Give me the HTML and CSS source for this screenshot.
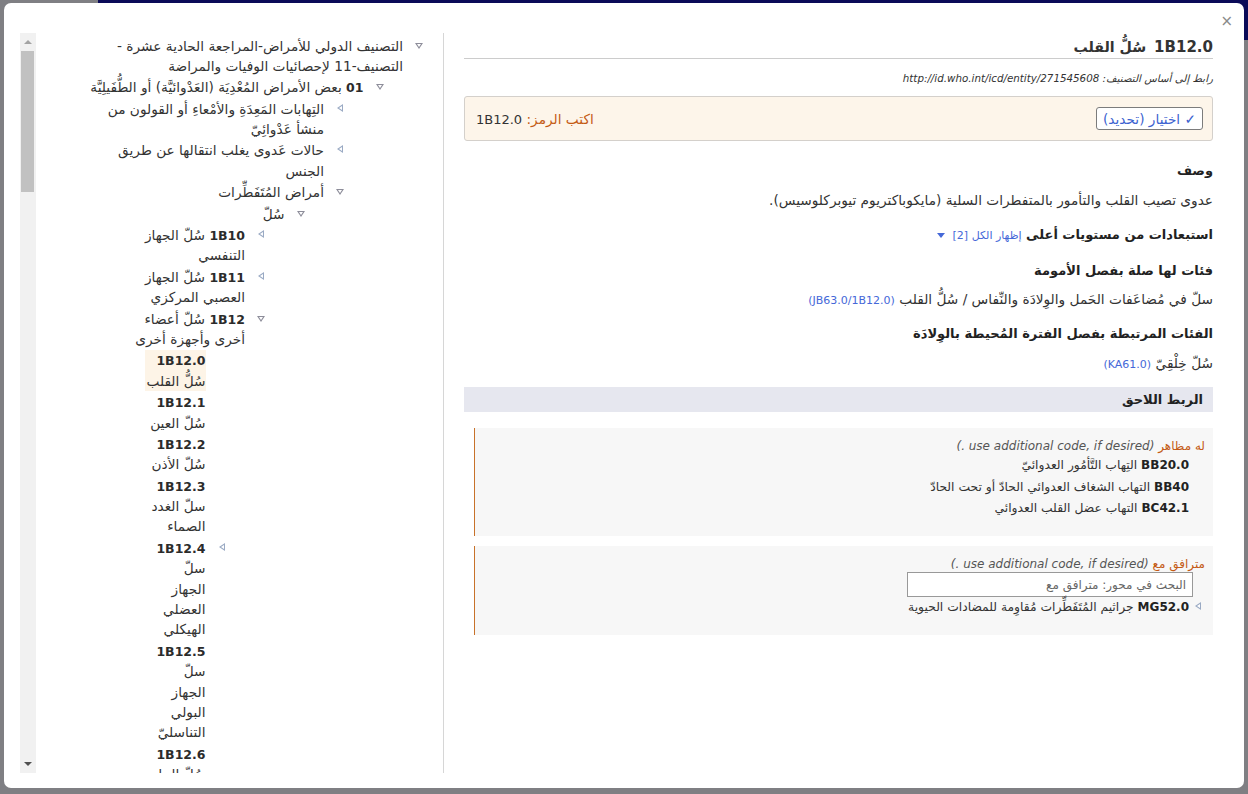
FILE: index.html
```html
<!DOCTYPE html>
<html lang="ar">
<head>
<meta charset="utf-8">
<title>1B12.0 سُلُّ القلب</title>
<link rel="stylesheet" href="styles.css">
</head>
<body>
<div class="modal">
  <button class="close" type="button">×</button>
  <div class="panes">
    <div class="tree-pane">
      <div class="scrollbar">
        <span class="arrow up"></span>
        <div class="track"><div class="thumb"></div></div>
        <span class="arrow down"></span>
      </div>
      <div class="tree" dir="rtl">
        <ul class="level">
          <li>
            <div class="row"><span class="tw open"></span><span class="label"><span class="ln">التصنيف الدولي للأمراض-المراجعة الحادية عشرة -</span><span class="ln">التصنيف-11 لإحصائيات الوفيات والمراضة</span></span></div>
            <ul class="level">
              <li>
                <div class="row"><span class="tw open"></span><span class="label"><span class="ln"><b>01</b> بعض الأمراض المُعْدِيَة (العَدْوائيَّة) أو الطُّفَيلِيَّة</span></span></div>
                <ul class="level">
                  <li><div class="row"><span class="tw closed"></span><span class="label"><span class="ln">التِهابات المَعِدَةِ والأمْعاءِ أو القولون من</span><span class="ln">منشأ عَدْوائِيّ</span></span></div></li>
                  <li><div class="row"><span class="tw closed"></span><span class="label"><span class="ln">حالات عَدوى يغلب انتقالها عن طريق</span><span class="ln">الجنس</span></span></div></li>
                  <li>
                    <div class="row"><span class="tw open"></span><span class="label"><span class="ln">أمراض المُتَفَطِّرات</span></span></div>
                    <ul class="level">
                      <li>
                        <div class="row"><span class="tw open"></span><span class="label"><span class="ln">سُلّ</span></span></div>
                        <ul class="level">
                          <li><div class="row"><span class="tw closed"></span><span class="label"><span class="ln"><b>1B10</b> سُلّ الجهاز</span><span class="ln">التنفسي</span></span></div></li>
                          <li><div class="row"><span class="tw closed"></span><span class="label"><span class="ln"><b>1B11</b> سُلّ الجهاز</span><span class="ln">العصبي المركزي</span></span></div></li>
                          <li>
                            <div class="row"><span class="tw open"></span><span class="label"><span class="ln"><b>1B12</b> سُلّ أعضاء</span><span class="ln">أخرى وأجهزة أخرى</span></span></div>
                            <ul class="level">
                              <li><div class="row"><span class="tw"></span><span class="label selected"><span class="ln"><b>1B12.0</b></span><span class="ln">سُلُّ القلب</span></span></div></li>
                              <li><div class="row"><span class="tw"></span><span class="label"><span class="ln"><b>1B12.1</b></span><span class="ln">سُلّ العين</span></span></div></li>
                              <li><div class="row"><span class="tw"></span><span class="label"><span class="ln"><b>1B12.2</b></span><span class="ln">سُلّ الأذن</span></span></div></li>
                              <li><div class="row"><span class="tw"></span><span class="label"><span class="ln"><b>1B12.3</b></span><span class="ln">سلّ الغدد</span><span class="ln">الصماء</span></span></div></li>
                              <li><div class="row"><span class="tw closed"></span><span class="label"><span class="ln"><b>1B12.4</b></span><span class="ln">سلّ</span><span class="ln">الجهاز</span><span class="ln">العضلي</span><span class="ln">الهيكلي</span></span></div></li>
                              <li><div class="row"><span class="tw"></span><span class="label"><span class="ln"><b>1B12.5</b></span><span class="ln">سلّ</span><span class="ln">الجهاز</span><span class="ln">البولي</span><span class="ln">التناسليّ</span></span></div></li>
                              <li><div class="row"><span class="tw"></span><span class="label"><span class="ln"><b>1B12.6</b></span><span class="ln">سُلّ الجلد</span></span></div></li>
                            </ul>
                          </li>
                        </ul>
                      </li>
                    </ul>
                  </li>
                </ul>
              </li>
            </ul>
          </li>
        </ul>
      </div>
    </div>

    <div class="detail" dir="rtl">
      <h1 class="title"><span class="code">1B12.0</span> سُلُّ القلب</h1>
      <div class="uri">رابط إلى أساس التصنيف: http://id.who.int/icd/entity/271545608</div>

      <div class="codebox">
        <button class="select" type="button">✓ اختيار (تحديد)</button>
        <div class="codeline"><span class="lbl">اكتب الرمز:</span> <span class="cv">1B12.0</span></div>
      </div>

      <h2 class="sec">وصف</h2>
      <p class="txt">عدوى تصيب القلب والتأمور بالمتفطرات السلية (مايكوباكتريوم تيوبركلوسيس).</p>

      <h2 class="sec">استبعادات من مستويات أعلى <span class="showall">إظهار الكل [2]</span> <span class="caret"></span></h2>

      <h2 class="sec">فئات لها صلة بفصل الأمومة</h2>
      <p class="txt">سلّ في مُضاعَفات الحَمل والوِلادَة والنِّفاس / سُلُّ القلب <span class="link">(JB63.0/1B12.0)</span></p>

      <h2 class="sec">الفئات المرتبطة بفصل الفترة المُحيطة بالوِلادَة</h2>
      <p class="txt">سُلّ خِلْقِيّ <span class="link">(KA61.0)</span></p>

      <div class="bar">الربط اللاحق</div>

      <div class="pc pc-first">
        <div class="pchead"><span class="axis">له مظاهر</span> <i class="hint">(use additional code, if desired .)</i></div>
        <div class="pcitem"><b>BB20.0</b> التِهاب التَّأمُور العدوائيّ</div>
        <div class="pcitem"><b>BB40</b> التهاب الشغاف العدوائي الحادّ أو تحت الحادّ</div>
        <div class="pcitem"><b>BC42.1</b> التهاب عضل القلب العدوائي</div>
      </div>

      <div class="pc pc-second">
        <div class="pchead"><span class="axis">مترافق مع</span> <i class="hint">(use additional code, if desired .)</i></div>
        <div class="search"><input type="text" placeholder="البحث في محور: مترافق مع"></div>
        <div class="pcitem tri"><span class="tw closed"></span><b>MG52.0</b> جراثيم المُتَفَطِّرات مُقاوِمة للمضادات الحيوية</div>
      </div>
    </div>
  </div>
</div>
</body>
</html>
```

FILE: styles.css
```css
* { box-sizing: border-box; }

html, body {
  margin: 0;
  height: 100%;
}

body {
  font-family: "DejaVu Sans", "Noto Sans", sans-serif;
  font-size: 13px;
  color: #333;
  background:
    linear-gradient(#0b0b58, #0b0b58) 98px 0 / 1150px 40px no-repeat,
    #7f7f83;
  padding: 3px 4px 0;
  overflow: hidden;
}

.modal {
  position: relative;
  width: 1240px;
  height: 785px;
  background: #fff;
  border-radius: 7px;
  padding: 30px 0 0 16px;
}

.close {
  position: absolute;
  top: 10px;
  right: 11px;
  border: 0;
  background: none;
  padding: 0;
  font-family: "DejaVu Sans", sans-serif;
  font-size: 15px;
  line-height: 16px;
  color: #8a8a8a;
  cursor: pointer;
}

.panes {
  display: flex;
  height: 740px;
}

/* ---------- tree pane ---------- */
.tree-pane {
  width: 424px;
  flex: none;
  display: flex;
  border-right: 1px solid #d6d6d6;
}

.scrollbar {
  width: 16px;
  flex: none;
  background: #f1f1f1;
  display: flex;
  flex-direction: column;
  align-items: center;
}

.scrollbar .track {
  flex: 1;
  width: 100%;
  padding: 1px 2px 0 1px;
}

.scrollbar .thumb {
  height: 141px;
  background: #c1c1c1;
}

.arrow {
  display: block;
  width: 0;
  height: 0;
  border-left: 4px solid transparent;
  border-right: 4px solid transparent;
}
.arrow.up { border-bottom: 4px solid #a3a3a3; margin: 7px 0 6px; }
.arrow.down { border-top: 4px solid #505050; margin: 6px 0 7px; }

.tree {
  flex: 1;
  overflow: hidden;
  padding: 2px 20px 0 0;
}

.tree ul.level {
  list-style: none;
  margin: 0;
  padding: 0;
}
.tree ul.level ul.level {
  padding-right: 39.5px;
}
.tree li {
  margin: 0;
}
.tree .row {
  display: flex;
  align-items: flex-start;
  padding: 0.5px 0;
}
.tw {
  flex: none;
  width: 8px;
  height: 20px;
  margin-left: 12px;
  position: relative;
}
.tw.open::before {
  content: "";
  position: absolute;
  top: 7px;
  right: 0;
  border-left: 4px solid transparent;
  border-right: 4px solid transparent;
  border-top: 6px solid #8d8d9a;
}
.tw.open::after {
  content: "";
  position: absolute;
  top: 8px;
  right: 2px;
  border-left: 2px solid transparent;
  border-right: 2px solid transparent;
  border-top: 3px solid #fff;
}
.tw.closed::before {
  content: "";
  position: absolute;
  top: 5px;
  right: 1px;
  border-top: 4px solid transparent;
  border-bottom: 4px solid transparent;
  border-right: 6px solid #9aaac4;
}
.tw.closed::after {
  content: "";
  position: absolute;
  top: 7px;
  right: 2px;
  border-top: 2px solid transparent;
  border-bottom: 2px solid transparent;
  border-right: 3px solid #fff;
}
.tree .label {
  display: block;
  font-size: 13.7px;
  white-space: nowrap;
  color: #333;
}
.tree .ln {
  display: block;
  height: 20.4px;
  line-height: 20px;
  overflow: visible;
}
.tree .label b {
  font-size: 12.5px;
  color: #2b2b2b;
}
.tree .label.selected {
  background: #fdf4e7;
  padding: 0 0 0 1px;
}

/* ---------- detail pane ---------- */
.detail {
  flex: 1;
  padding: 0 31px 0 20px;
  overflow: hidden;
  text-align: right;
}

.title {
  margin: 0;
  font-size: 14.2px;
  line-height: 20px;
  height: 26px;
  font-weight: bold;
  color: #333;
  padding: 4px 0 1px;
  border-bottom: 1px solid #cccccc;
}
.title .code { font-size: 15px; padding-left: 3px; }

.uri {
  font-size: 10.3px;
  font-style: italic;
  color: #333;
  line-height: 14px;
  height: 14px;
  margin: 12px 0 11px;
}

.codebox {
  display: flex;
  justify-content: space-between;
  align-items: center;
  background: #fdf5ea;
  border: 1px solid #d4d0cb;
  border-radius: 3px;
  height: 45px;
  padding: 0 9px 0 11px;
}

.select {
  font-family: "DejaVu Sans", sans-serif;
  font-size: 13.7px;
  color: #3b62d0;
  background: #fff;
  border: 1px solid #7c7c7c;
  border-radius: 3px;
  height: 23px;
  padding: 0 6px;
  line-height: 20px;
}

.codeline {
  font-size: 13.7px;
  color: #333;
}
.codeline .lbl { color: #c45a14; }
.codeline .cv { font-size: 13px; }

.sec {
  margin: 0;
  font-size: 13px;
  font-weight: bold;
  color: #222;
  line-height: 20px;
  height: 20px;
}
.codebox + .sec { margin-top: 20px; }
.txt + .sec { margin-top: 15px; }
.sec + .sec { margin-top: 16px; }

.txt {
  margin: 8.5px 0 0;
  font-size: 13.7px;
  line-height: 20px;
  height: 20px;
  color: #333;
}

.link { color: #4568d8; font-size: 11px; }

.showall {
  font-size: 11px;
  font-weight: normal;
  color: #4568d8;
}
.caret {
  display: inline-block;
  width: 0;
  height: 0;
  margin-right: 3px;
  vertical-align: middle;
  border-left: 4px solid transparent;
  border-right: 4px solid transparent;
  border-top: 5px solid #4568d8;
}

.bar {
  margin-top: 14.5px;
  background: #e6e7ef;
  height: 25px;
  line-height: 25px;
  padding-right: 10px;
  font-size: 13px;
  font-weight: bold;
  color: #222;
}

.pc {
  margin: 16px 0 0 10px;
  background: #f7f7f7;
  border-left: 1px solid #c8722a;
  padding: 10px 8px 0 0;
}
.pc-first { height: 108px; }
.pc-second { height: 89px; margin-top: 10px; }

.pchead {
  font-size: 12px;
  line-height: 17px;
  height: 17px;
  color: #555;
}
.pc-second .pchead { height: 16px; }
.pchead .axis { color: #c45a14; font-style: normal; }
.pchead .hint { color: #555; }

.pcitem {
  font-size: 12.3px;
  line-height: 20px;
  height: 20px;
  color: #333;
  padding-right: 16px;
}
.pc-first .pcitem + .pcitem { margin-top: 1.5px; }
.pcitem b { color: #222; font-size: 12px; }

.search {
  padding: 0 12px 0 0;
}
.search input {
  display: block;
  width: 286px;
  height: 25px;
  border: 1px solid #999;
  font-family: "DejaVu Sans", sans-serif;
  font-size: 12px;
  padding: 0 6px;
  direction: rtl;
  background: #fff;
}
.search input::placeholder { color: #666; }

.pcitem.tri {
  display: flex;
  align-items: flex-start;
  padding-right: 3px;
  white-space: nowrap;
}
.pcitem.tri .tw {
  margin-left: 5px;
}
.pcitem.tri b { margin-left: 4px; }
```
